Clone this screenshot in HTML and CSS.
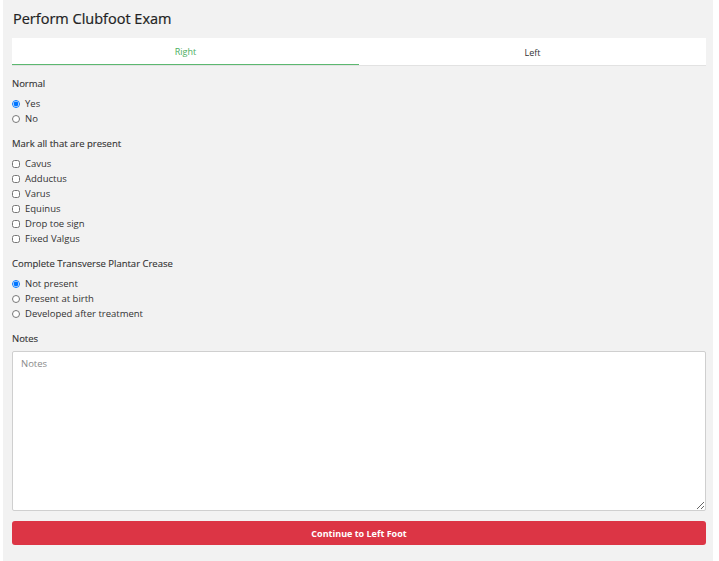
FILE: index.html
```html
<!DOCTYPE html>
<html lang="en">
<head>
<meta charset="utf-8">
<title>Perform Clubfoot Exam</title>
<link rel="stylesheet" href="styles.css">
</head>
<body>
<div class="panel">
  <h1 class="title">Perform Clubfoot Exam</h1>
  <div class="tabs">
    <div class="tab tab-active">Right</div>
    <div class="tab">Left</div>
  </div>

  <div class="section">
    <div class="label">Normal</div>
    <label class="option"><input type="radio" name="normal" checked><span>Yes</span></label>
    <label class="option"><input type="radio" name="normal"><span>No</span></label>
  </div>

  <div class="section">
    <div class="label">Mark all that are present</div>
    <label class="option"><input type="checkbox"><span>Cavus</span></label>
    <label class="option"><input type="checkbox"><span>Adductus</span></label>
    <label class="option"><input type="checkbox"><span>Varus</span></label>
    <label class="option"><input type="checkbox"><span>Equinus</span></label>
    <label class="option"><input type="checkbox"><span>Drop toe sign</span></label>
    <label class="option"><input type="checkbox"><span>Fixed Valgus</span></label>
  </div>

  <div class="section">
    <div class="label">Complete Transverse Plantar Crease</div>
    <label class="option"><input type="radio" name="crease" checked><span>Not present</span></label>
    <label class="option"><input type="radio" name="crease"><span>Present at birth</span></label>
    <label class="option"><input type="radio" name="crease"><span>Developed after treatment</span></label>
  </div>

  <div class="section">
    <div class="label">Notes</div>
    <textarea class="notes" placeholder="Notes"></textarea>
  </div>

  <button class="continue" type="button">Continue to Left Foot</button>
</div>
</body>
</html>
```

FILE: styles.css
```css
html, body {
  margin: 0;
  padding: 0;
  background: #ffffff;
}

body {
  font-family: "Open Sans", "Noto Sans", Arial, sans-serif;
  color: #333333;
}

.panel {
  box-sizing: border-box;
  width: 710px;
  min-height: 561px;
  margin-left: 3px;
  background: #f2f2f2;
  padding: 9px 7px 10px 9px;
}

.title {
  margin: 0 0 9px 1px;
  font-size: 14.5px;
  font-weight: 400;
  line-height: 20px;
  color: #222222;
  -webkit-text-stroke: 0.2px #222222;
}

.tabs {
  display: flex;
  background: #ffffff;
  height: 28px;
  border-bottom: 1px solid #e2e2e2;
  box-sizing: border-box;
  margin-bottom: 10px;
}

.tab {
  flex: 1;
  display: flex;
  align-items: center;
  justify-content: center;
  font-size: 9px;
  color: #333333;
  padding-top: 1px;
}

.tab-active {
  color: #4cae60;
  border-bottom: 1px solid #5cb870;
  padding-top: 0;
}

.section {
  margin-bottom: 10px;
}

.label {
  font-size: 9.5px;
  font-weight: 400;
  line-height: 15px;
  margin-bottom: 5px;
  color: #333333;
  -webkit-text-stroke: 0.12px #333333;
}

.option {
  display: flex;
  align-items: center;
  height: 15px;
  font-size: 9.5px;
  color: #333333;
}

.option input {
  width: 8px;
  height: 8px;
  margin: 0 5px 0 0;
}

.notes {
  display: block;
  box-sizing: border-box;
  width: 100%;
  height: 160px;
  margin: 0;
  padding: 5px 8px;
  border: 1px solid #cfcfcf;
  border-radius: 2px;
  background: #ffffff;
  font-family: "Open Sans", "Noto Sans", Arial, sans-serif;
  font-size: 9.5px;
  color: #333333;
  resize: vertical;
}

.notes::placeholder {
  color: #8a8a8a;
}

.continue {
  display: block;
  width: 100%;
  height: 24px;
  border: none;
  border-radius: 3px;
  background: #dc3545;
  color: #ffffff;
  font-family: "Open Sans", "Noto Sans", Arial, sans-serif;
  font-size: 9px;
  font-weight: 700;
}
```
